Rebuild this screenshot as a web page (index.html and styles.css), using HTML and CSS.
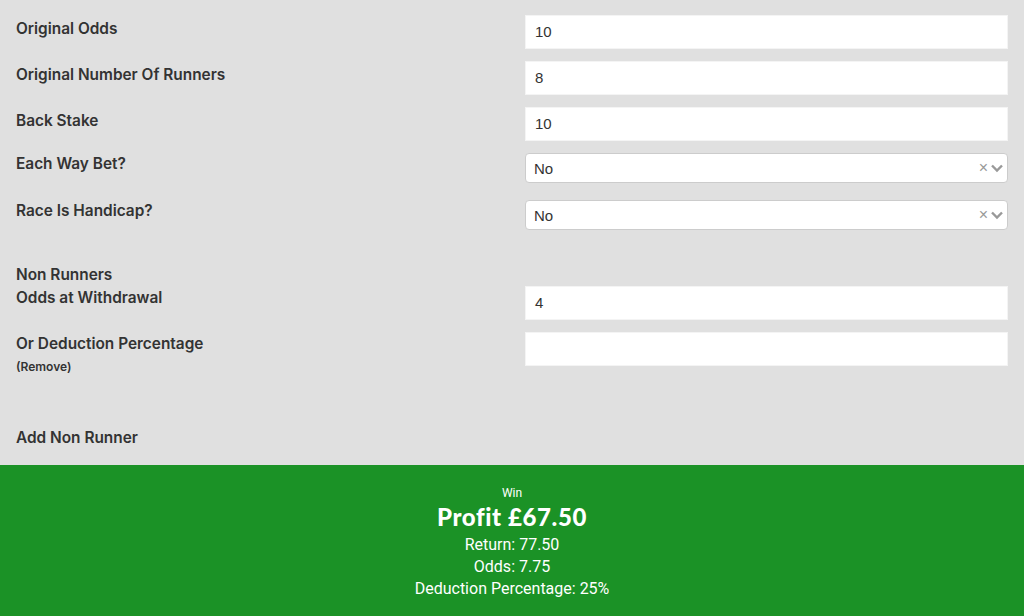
FILE: index.html
```html
<!DOCTYPE html>
<html>
<head>
<meta charset="utf-8">
<link rel="stylesheet" href="styles.css">
</head>
<body>
<div class="form">
  <div class="row">
    <div class="label">Original Odds</div>
    <div class="field"><div class="input">10</div></div>
  </div>
  <div class="row">
    <div class="label">Original Number Of Runners</div>
    <div class="field"><div class="input">8</div></div>
  </div>
  <div class="row">
    <div class="label">Back Stake</div>
    <div class="field"><div class="input">10</div></div>
  </div>
  <div class="row row-select">
    <div class="label">Each Way Bet?</div>
    <div class="field"><div class="select"><span>No</span><span class="clear">×</span><svg class="chev" width="14" height="10" viewBox="0 0 14 10"><path d="M2 2.5 L7 7.5 L12 2.5" fill="none" stroke="#999" stroke-width="2.4"/></svg></div></div>
  </div>
  <div class="row row-select">
    <div class="label">Race Is Handicap?</div>
    <div class="field"><div class="select"><span>No</span><span class="clear">×</span><svg class="chev" width="14" height="10" viewBox="0 0 14 10"><path d="M2 2.5 L7 7.5 L12 2.5" fill="none" stroke="#999" stroke-width="2.4"/></svg></div></div>
  </div>
  <div class="section-title">Non Runners</div>
  <div class="row row-nr">
    <div class="label">Odds at Withdrawal</div>
    <div class="field"><div class="input">4</div></div>
  </div>
  <div class="row row-nr">
    <div class="label">Or Deduction Percentage<div class="remove">(Remove)</div></div>
    <div class="field"><div class="input"></div></div>
  </div>
  <div class="add">Add Non Runner</div>
</div>
<div class="result">
  <div class="win">Win</div>
  <div class="profit">Profit £67.50</div>
  <div class="line">Return: 77.50</div>
  <div class="line">Odds: 7.75</div>
  <div class="line">Deduction Percentage: 25%</div>
</div>
</body>
</html>
```
FILE: styles.css
```css
html, body {
  margin: 0;
  padding: 0;
  background: #e0e0e0;
  height: 616px;
  overflow: hidden;
}
.form {
  padding: 15px 16px 0 16px;
  height: 450px;
}
.row {
  display: grid;
  grid-template-columns: 509px 483px;
  margin-bottom: 12px;
}
.label {
  font-family: Inter, "Noto Sans", sans-serif;
  font-weight: 600;
  font-size: 15.4px;
  color: #333;
  padding-top: 5px;
  line-height: 18px;
}
.input {
  background: #fff;
  height: 34px;
  box-sizing: border-box;
  border: 1px solid #f4f4f4;
  font-family: "Liberation Sans", Arial, sans-serif;
  font-size: 15px;
  color: #333;
  padding: 7px 9px;
  line-height: 17px;
}
.row-select { margin-bottom: 17px; }
.row-select .label { padding-top: 2px; }
.select {
  background: #fff;
  height: 30px;
  box-sizing: border-box;
  border: 1px solid #ccc;
  border-radius: 4px;
  display: flex;
  align-items: center;
  font-family: "Liberation Sans", Arial, sans-serif;
  font-size: 15px;
  color: #333;
  padding: 0 0 0 8px;
}
.select span:first-child { flex: 1; }
.clear {
  color: #999;
  font-size: 16px;
  margin-right: 2px;
  line-height: 1;
}
.chev { margin-right: 3px; }
.section-title {
  font-family: Inter, "Noto Sans", sans-serif;
  font-weight: 600;
  font-size: 15.4px;
  color: #333;
  margin-top: 36px;
  line-height: 18px;
}
.row-nr .label { padding-top: 3px; }
.row-nr:nth-of-type(7) { margin-top: 2px; }
.remove {
  font-size: 12px;
  font-weight: 600;
  line-height: 14px;
  margin-top: 7px;
}
.add {
  font-family: Inter, "Noto Sans", sans-serif;
  font-weight: 600;
  font-size: 15.4px;
  color: #333;
  margin-top: 55px;
  line-height: 18px;
}
.result {
  background: #1b9226;
  height: 151px;
  color: #fff;
  text-align: center;
  font-family: Roboto, "Liberation Sans", sans-serif;
  padding-top: 21px;
  box-sizing: border-box;
}
.win { font-size: 12px; line-height: 14px; }
.profit {
  font-family: Lato, sans-serif;
  font-weight: 900;
  font-size: 24px;
  letter-spacing: 0.6px;
  line-height: 34px;
}
.line { font-size: 16px; line-height: 22px; }
```
